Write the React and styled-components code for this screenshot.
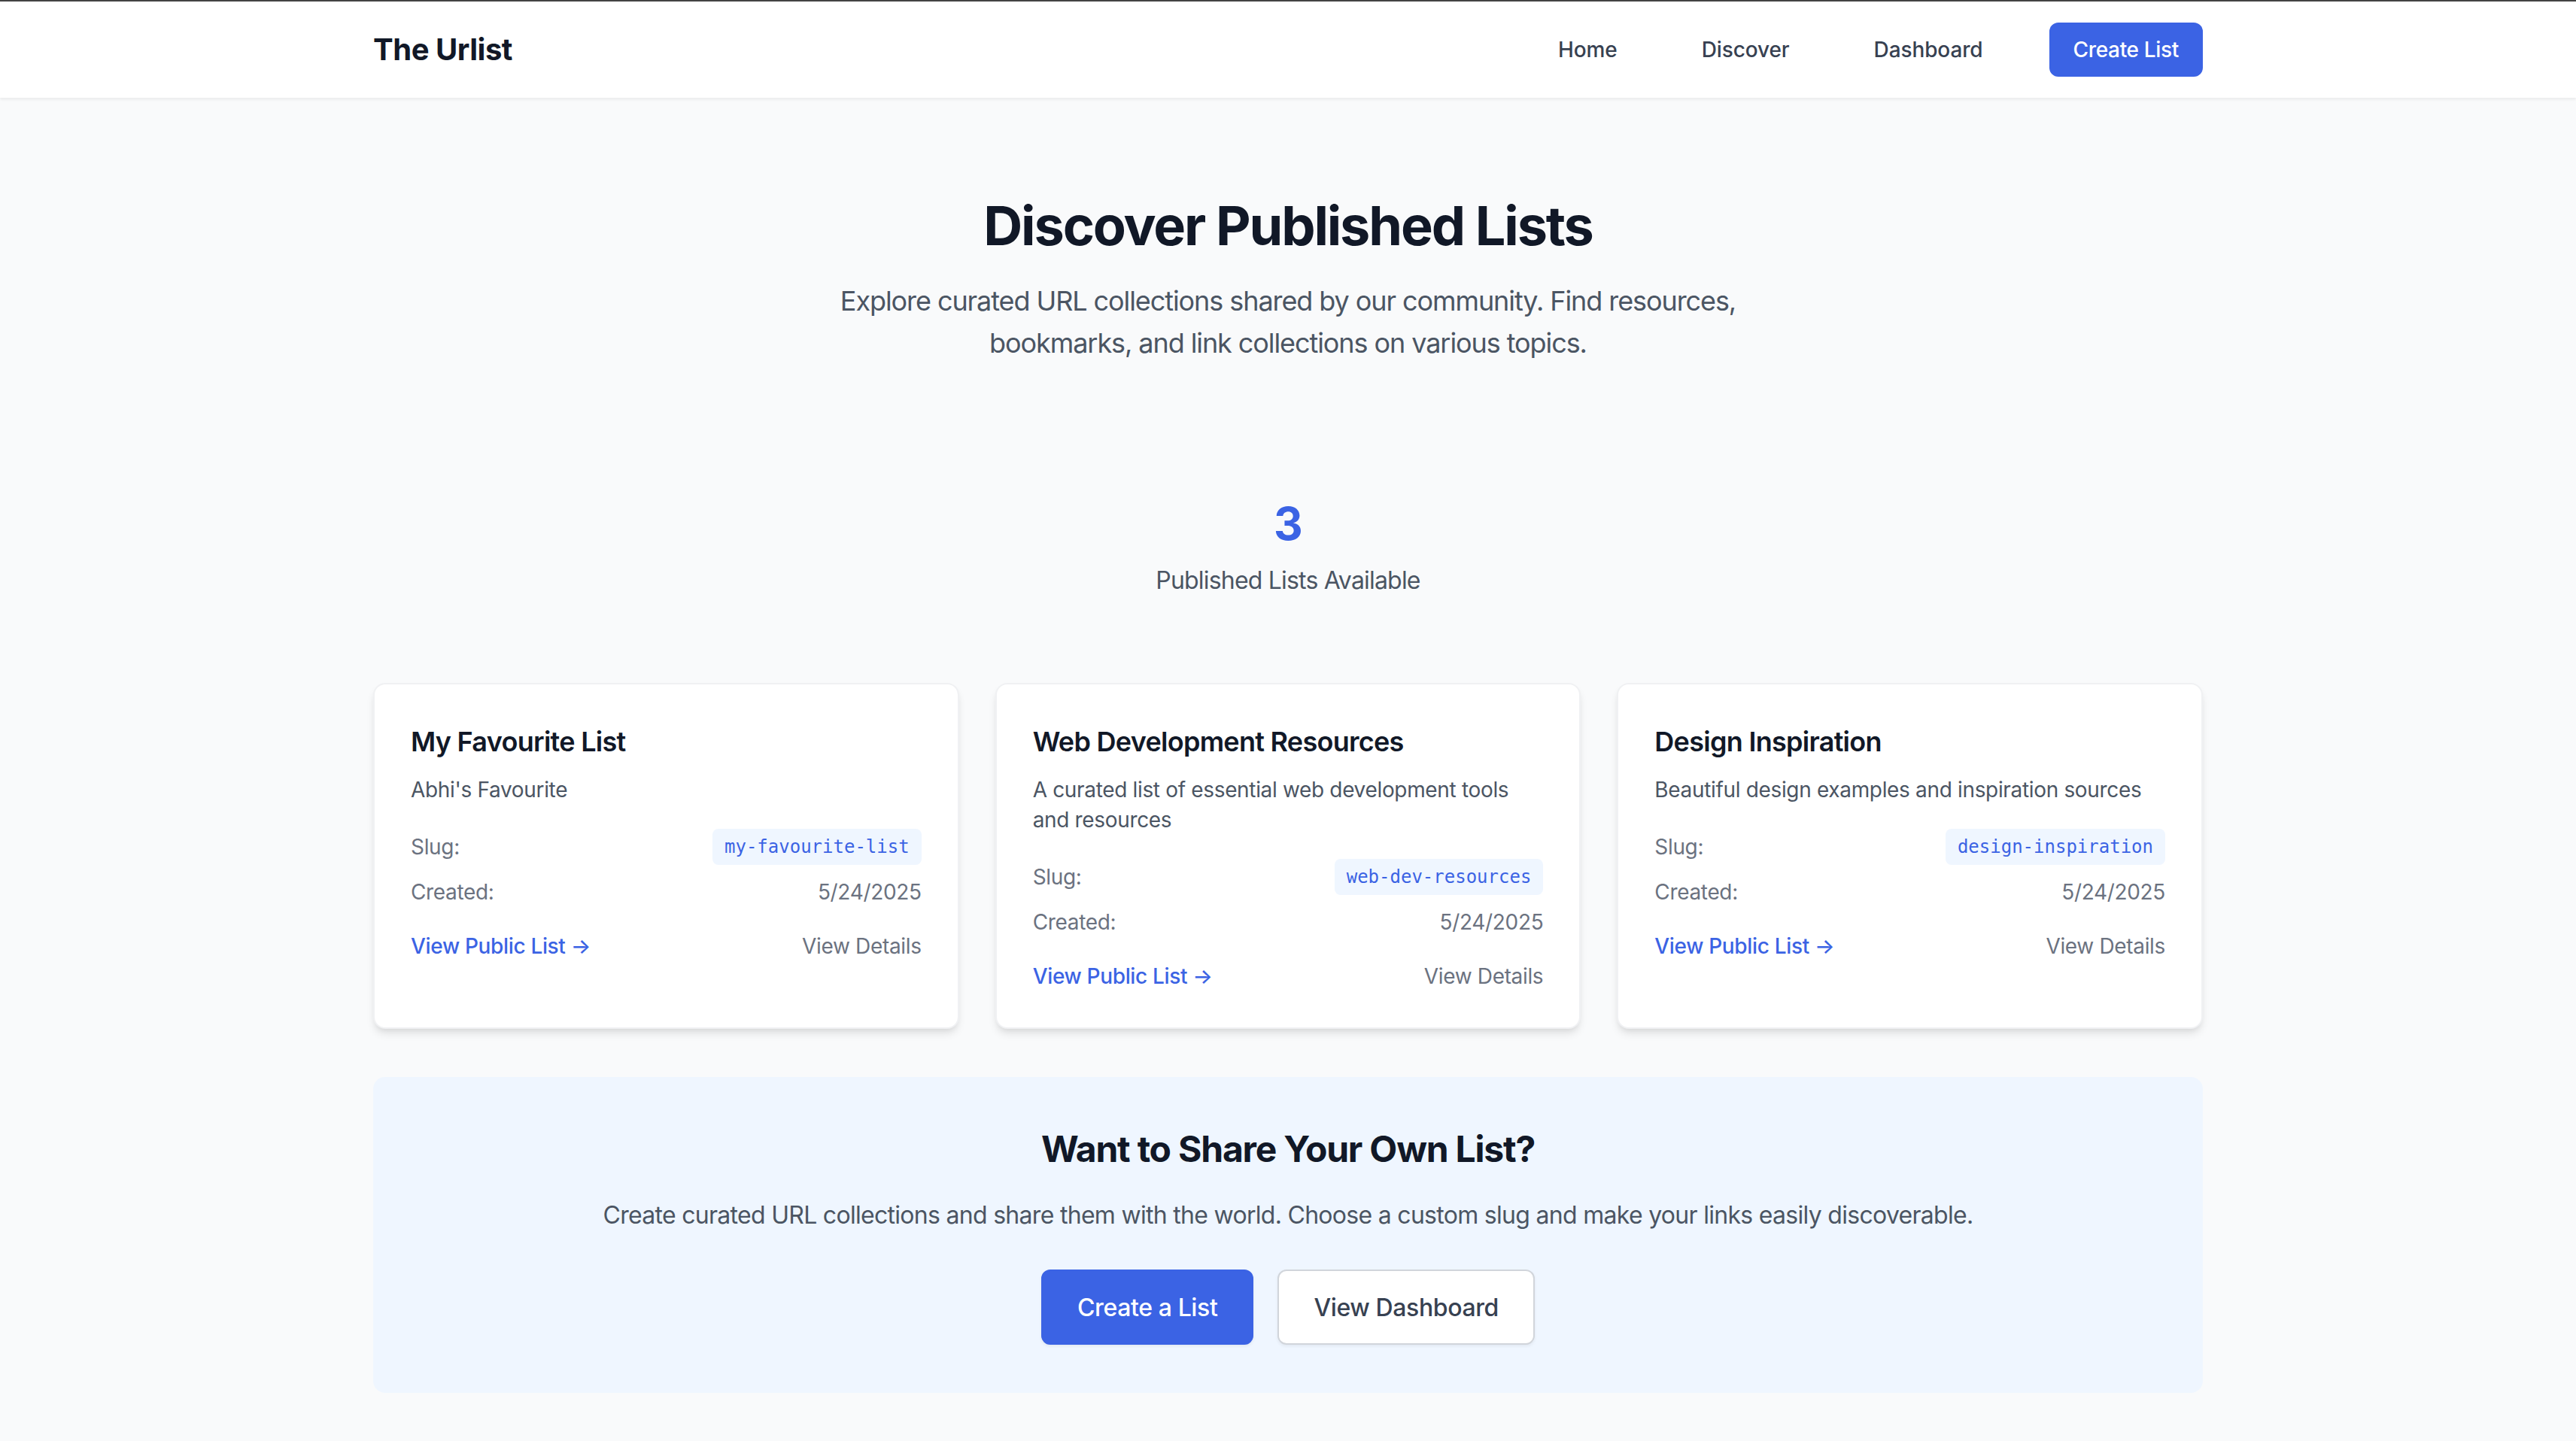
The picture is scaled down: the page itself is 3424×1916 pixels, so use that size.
import React from "react";
import styled, { createGlobalStyle } from "styled-components";

const GlobalStyle = createGlobalStyle`
* {
  margin: 0;
  padding: 0;
  box-sizing: border-box;
  letter-spacing: -0.012em;
}
body {
  background: #f9fafb;
  font-family: Inter, "Noto Sans", "Liberation Sans", sans-serif;
  color: #111827;
}
`

const BLUE = "#3b63e4";

const Nav = styled.nav`
  background: #fff;
  border-top: 2px solid #434343;
  box-shadow: 0 2px 4px rgba(0, 0, 0, 0.07);
  position: relative;
`
const NavInner = styled.div`
  max-width: 2560px;
  height: 128px;
  margin: 0 auto;
  padding: 0 64px;
  display: flex;
  justify-content: space-between;
  align-items: center;
`
const Logo = styled.a`
  font-size: 40px;
  line-height: 56px;
  font-weight: 700;
  letter-spacing: -0.012em;
  color: #111827;
  text-decoration: none;
`
const NavLinks = styled.div`
  display: flex;
  align-items: center;
  gap: 64px;
`
const NavLink = styled.a`
  font-size: 28px;
  line-height: 40px;
  font-weight: 500;
  letter-spacing: -0.004em;
  color: #374151;
  padding: 16px 24px;
  text-decoration: none;
`
const NavButton = styled.a`
  background: ${BLUE};
  color: #fff;
  font-size: 28px;
  line-height: 40px;
  font-weight: 500;
  padding: 16px 32px;
  border-radius: 12px;
  text-decoration: none;
`

const Main = styled.main`
  max-width: 2560px;
  margin: 0 auto;
  padding: 130px 64px 64px;
`
const Hero = styled.header`
  text-align: center;
`
const Title = styled.h1`
  font-size: 72px;
  line-height: 80px;
  font-weight: 700;
  letter-spacing: -0.03em;
  color: #111827;
  margin-bottom: 32px;
`
const Subtitle = styled.p`
  font-size: 36px;
  line-height: 56px;
  letter-spacing: -0.03em;
  color: #4b5563;
  max-width: 1344px;
  margin: 0 auto;
`

const Stats = styled.section`
  margin-top: 176px;
  text-align: center;
`
const StatNumber = styled.div`
  font-size: 60px;
  line-height: 72px;
  font-weight: 700;
  color: ${BLUE};
  margin-bottom: 16px;
`
const StatLabel = styled.div`
  font-size: 32px;
  line-height: 48px;
  letter-spacing: -0.025em;
  color: #4b5563;
`

const Grid = styled.section`
  margin-top: 112px;
  display: grid;
  grid-template-columns: repeat(3, 1fr);
  gap: 48px;
`
const Card = styled.article`
  background: #fff;
  border: 2px solid #f0f1f3;
  border-radius: 16px;
  padding: 48px;
  box-shadow: 0 8px 12px -2px rgba(0, 0, 0, 0.1), 0 4px 8px -4px rgba(0, 0, 0, 0.08);
`
const CardTitle = styled.h3`
  font-size: 36px;
  line-height: 56px;
  font-weight: 600;
  letter-spacing: -0.02em;
  color: #111827;
  margin-bottom: 16px;
`
const CardDesc = styled.p`
  font-size: 28px;
  line-height: 40px;
  color: #4b5563;
  margin-bottom: 32px;
`
const Meta = styled.div`
  display: flex;
  flex-direction: column;
  gap: 16px;
`
const MetaRow = styled.div`
  display: flex;
  justify-content: space-between;
  align-items: center;
  font-size: 28px;
  line-height: 40px;
  color: #6b7280;
`
const Slug = styled.code`
  font-family: "DejaVu Sans Mono", "Liberation Mono", monospace;
  font-size: 24px;
  line-height: 32px;
  letter-spacing: 0;
  padding: 8px 16px;
  background: #eff6ff;
  color: ${BLUE};
  border-radius: 8px;
`
const CardFooter = styled.div`
  margin-top: 32px;
  display: flex;
  justify-content: space-between;
  align-items: center;
  font-size: 28px;
  line-height: 40px;
`
const FooterLink = styled.a`
  color: ${p => (p.$primary ? BLUE : "#6b7280")};
  font-weight: ${p => (p.$primary ? 500 : 400)};
  text-decoration: none;
`

const Cta = styled.section`
  margin-top: 64px;
  background: #eff6ff;
  border-radius: 16px;
  padding: 64px;
  text-align: center;
`
const CtaTitle = styled.h2`
  font-size: 48px;
  line-height: 64px;
  font-weight: 700;
  letter-spacing: -0.025em;
  color: #111827;
  margin-bottom: 32px;
`
const CtaText = styled.p`
  font-size: 32px;
  line-height: 48px;
  letter-spacing: -0.022em;
  color: #4b5563;
  margin-bottom: 48px;
`
const CtaButtons = styled.div`
  display: flex;
  justify-content: center;
  gap: 32px;
`
const CtaButton = styled.a`
  display: inline-flex;
  align-items: center;
  height: 100px;
  padding: 0 46px;
  font-size: 32px;
  font-weight: 500;
  border-radius: 12px;
  text-decoration: none;
  border: 2px solid ${p => (p.$primary ? BLUE : "#d1d5db")};
  background: ${p => (p.$primary ? BLUE : "#fff")};
  color: ${p => (p.$primary ? "#fff" : "#374151")};
  box-shadow: 0 2px 4px rgba(0, 0, 0, 0.06);
`

const lists = [
  { title: "My Favourite List", desc: "Abhi's Favourite", slug: "my-favourite-list", created: "5/24/2025" },
  { title: "Web Development Resources", desc: "A curated list of essential web development tools and resources", slug: "web-dev-resources", created: "5/24/2025" },
  { title: "Design Inspiration", desc: "Beautiful design examples and inspiration sources", slug: "design-inspiration", created: "5/24/2025" },
];

function App() {
  return (
    <>
      <GlobalStyle />
      <Nav>
        <NavInner>
          <Logo href="#">The Urlist</Logo>
          <NavLinks>
            <NavLink href="#">Home</NavLink>
            <NavLink href="#">Discover</NavLink>
            <NavLink href="#">Dashboard</NavLink>
            <NavButton href="#">Create List</NavButton>
          </NavLinks>
        </NavInner>
      </Nav>

      <Main>
        <Hero>
          <Title>Discover Published Lists</Title>
          <Subtitle>
            Explore curated URL collections shared by our community. Find resources, bookmarks, and link collections on various topics.
          </Subtitle>
        </Hero>

        <Stats>
          <StatNumber>{lists.length}</StatNumber>
          <StatLabel>Published Lists Available</StatLabel>
        </Stats>

        <Grid>
          {lists.map(list => (
            <Card key={list.slug}>
              <CardTitle>{list.title}</CardTitle>
              <CardDesc>{list.desc}</CardDesc>
              <Meta>
                <MetaRow>
                  <span>Slug:</span>
                  <Slug>{list.slug}</Slug>
                </MetaRow>
                <MetaRow>
                  <span>Created:</span>
                  <span>{list.created}</span>
                </MetaRow>
              </Meta>
              <CardFooter>
                <FooterLink $primary href="#">View Public List →</FooterLink>
                <FooterLink href="#">View Details</FooterLink>
              </CardFooter>
            </Card>
          ))}
        </Grid>

        <Cta>
          <CtaTitle>Want to Share Your Own List?</CtaTitle>
          <CtaText>
            Create curated URL collections and share them with the world. Choose a custom slug and make your links easily discoverable.
          </CtaText>
          <CtaButtons>
            <CtaButton $primary href="#">Create a List</CtaButton>
            <CtaButton href="#">View Dashboard</CtaButton>
          </CtaButtons>
        </Cta>
      </Main>
    </>
  );
}

export default App;
